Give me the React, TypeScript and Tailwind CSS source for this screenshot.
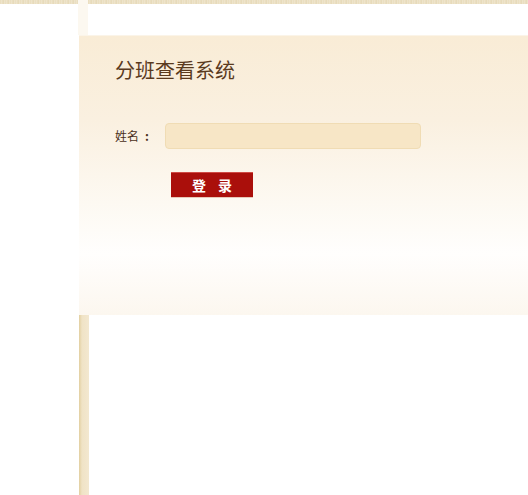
import React from "react";

const tex = "bg-[repeating-linear-gradient(90deg,#e9dcbc_0px,#efe6cf_2px,#e4d6b2_3px,#f0e8d3_5px)]";

export default function App() {
  return (
    <div className="w-[528px] h-[495px] bg-white flex flex-col overflow-hidden" style={{ fontFamily: '"Noto Sans CJK SC", "Noto Sans", sans-serif' }}>
      <div className="flex h-[35px] shrink-0">
        <div className="w-[78px] flex flex-col">
          <div className={`h-[4px] ${tex}`} />
        </div>
        <div className="w-[10px] bg-[#fcf8f0]" />
        <div className="flex-1 flex flex-col">
          <div className={`h-[4px] ${tex}`} />
        </div>
      </div>
      <div className="flex h-[280px] shrink-0">
        <div className="w-[79px]" />
        <div className="flex-1 border-t border-[#fbf4e8] bg-[linear-gradient(180deg,#f9ecd6_0%,#faf0e0_30%,#fefcf8_70%,#fffefd_78%,#fcf7ef_100%)] pl-[36px] pt-[21px]">
          <div className="text-[20px] leading-[26px] text-[#5a3a1e]">分班查看系统</div>
          <div className="flex items-center mt-[40px]">
            <span className="text-[12px] text-[#4a3020] w-[50px] flex items-center">
              <span>姓名</span>
              <span className="ml-[6px] font-bold">:</span>
            </span>
            <div className="w-[256px] h-[26px] rounded-[4px] bg-[#f7e6c6] border border-[#f0dcb4]" />
          </div>
          <div className="mt-[23px] ml-[56px] w-[82px] h-[25px] bg-[#aa0f0b] border-t border-[#cf4a44] shadow-[0_1px_0_#e8c8b8] flex items-center justify-center gap-[12px] text-white font-bold text-[14px]">
            <span>登</span>
            <span>录</span>
          </div>
        </div>
      </div>
      <div className="flex flex-1">
        <div className="w-[79px]" />
        <div className="w-[10px] bg-[linear-gradient(90deg,#e2cfa0_0px,#f0e3c6_3px,#f3e8d0_10px)]" />
      </div>
    </div>
  );
}
